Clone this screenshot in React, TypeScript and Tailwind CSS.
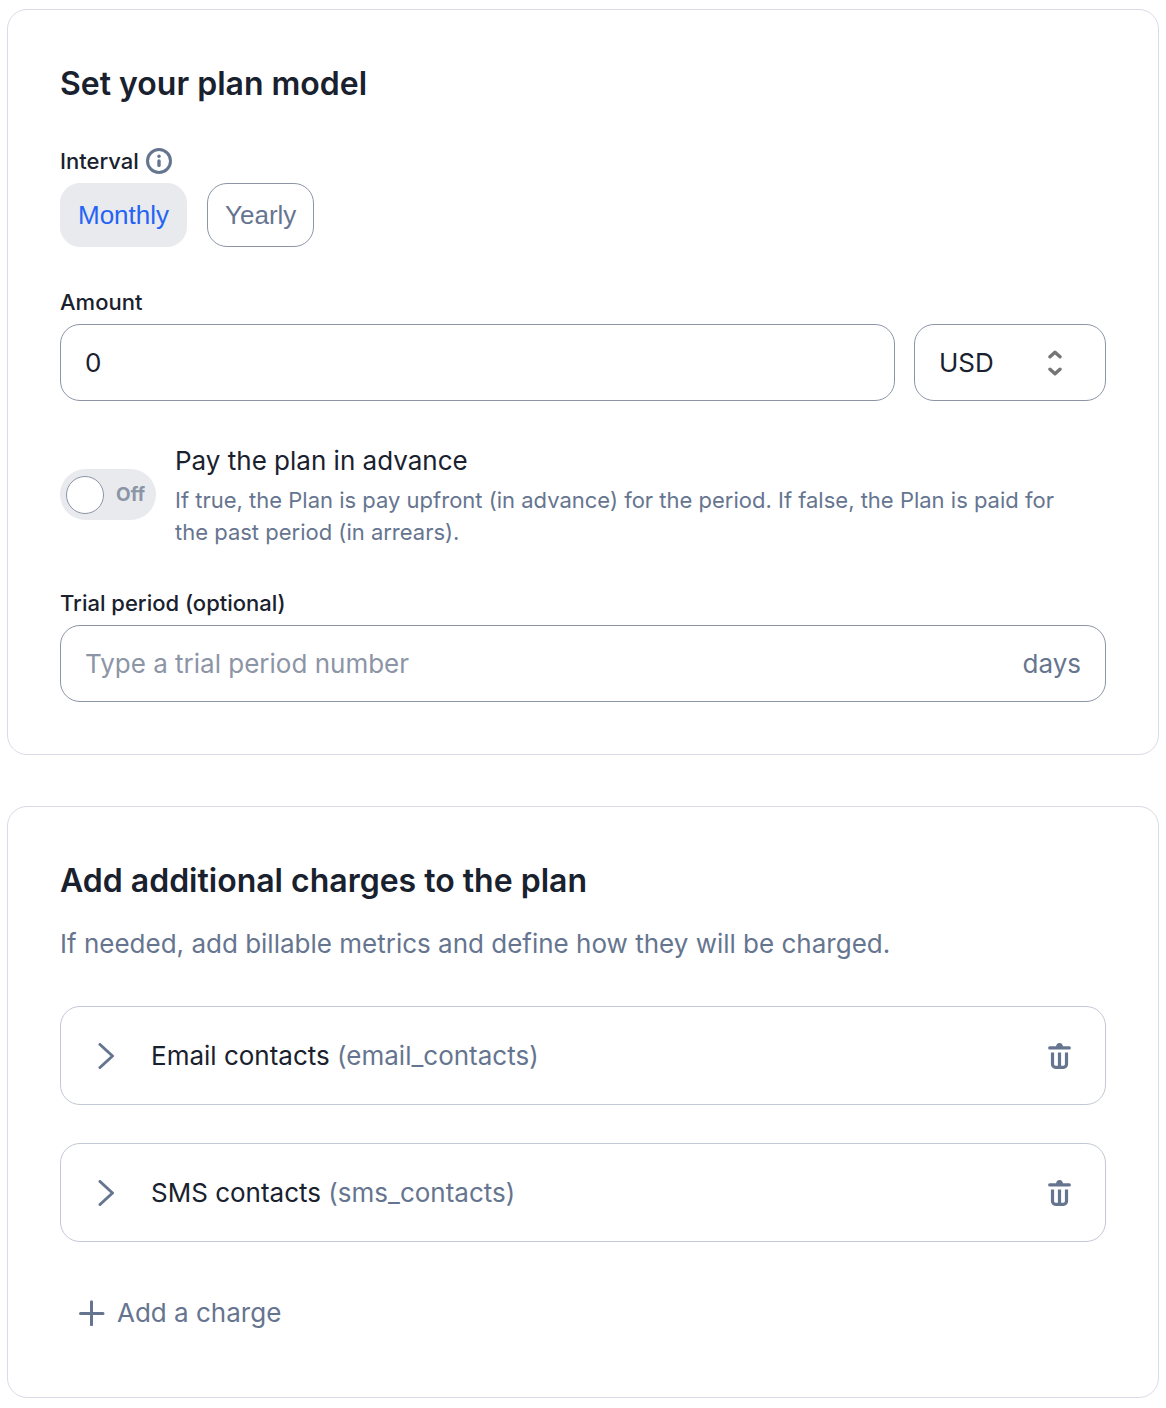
import { useState } from "react";
import type { ReactNode } from "react";

type Interval = "monthly" | "yearly";

interface Charge {
  name: string;
  code: string;
}

const intervals: { value: Interval; label: string }[] = [
  { value: "monthly", label: "Monthly" },
  { value: "yearly", label: "Yearly" },
];

const initialCharges: Charge[] = [
  { name: "Email contacts", code: "email_contacts" },
  { name: "SMS contacts", code: "sms_contacts" },
];

function InfoIcon() {
  return (
    <svg className="w-[26px] h-[26px]" fill="none" viewBox="0 0 26 26" aria-hidden="true">
      <circle cx="13" cy="13" r="11.5" stroke="currentColor" strokeWidth="3" />
      <circle cx="13" cy="8.3" r="1.7" fill="currentColor" />
      <path d="M13 13v4.4" stroke="currentColor" strokeWidth="3.4" strokeLinecap="round" />
    </svg>
  );
}

function UpDownIcon() {
  return (
    <svg className="w-4 h-[26px]" fill="none" stroke="currentColor" strokeWidth="3.4" strokeLinecap="round" strokeLinejoin="round" viewBox="0 0 16 26" aria-hidden="true">
      <path d="M3 6.800L8 2.200l5 4.600" />
      <path d="M3 19.200L8 23.800l5-4.600" />
    </svg>
  );
}

function ChevronIcon() {
  return (
    <svg className="w-[26px] h-[26px]" fill="none" stroke="currentColor" strokeWidth="3" strokeLinecap="round" strokeLinejoin="round" viewBox="0 0 26 26" aria-hidden="true">
      <path d="M7 1.500L19.500 13L7 24.500" />
    </svg>
  );
}

function TrashIcon() {
  return (
    <svg className="w-[26px] h-[26px]" fill="none" stroke="currentColor" viewBox="0 0 26 26" aria-hidden="true">
      <path d="M9 4.500a3.500 4.500 0 0 1 7 0z" fill="currentColor" stroke="none" />
      <path d="M2.700 4.900h19.600" strokeWidth="3.200" strokeLinecap="round" />
      <path d="M5.500 9.500v11.800a3 3 0 0 0 3 3h8a3 3 0 0 0 3-3V9.500M12.500 9.500v14.500" strokeWidth="3.200" />
    </svg>
  );
}

function PlusIcon() {
  return (
    <svg className="w-[26px] h-[26px]" fill="none" stroke="currentColor" strokeWidth="3" strokeLinecap="round" viewBox="0 0 26 26" aria-hidden="true">
      <path d="M12.500 1.800v23M1.500 13.500h22.500" />
    </svg>
  );
}

function Card({ children }: { children: ReactNode }) {
  return (
    <section className="flex flex-col border border-[#d9dbe6] rounded-[20px] px-[52px] pt-[51px] pb-[52px]">
      {children}
    </section>
  );
}

export default function App() {
  const [interval, setInterval] = useState<Interval>("monthly");
  const [amount, setAmount] = useState("0");
  const [currency, setCurrency] = useState("USD");
  const [payInAdvance, setPayInAdvance] = useState(false);
  const [trialPeriod, setTrialPeriod] = useState("");
  const [charges, setCharges] = useState(initialCharges);

  const removeCharge = (code: string) => {
    setCharges(charges.filter(charge => charge.code !== code));
  };

  const addCharge = () => {
    const index = charges.length + 1;
    setCharges([...charges, { name: `Charge ${index}`, code: `charge_${index}` }]);
  };

  return (
    <main className="flex flex-col gap-[51px] px-[7px] pt-[9px] pb-[10px] bg-white text-[#19212e] text-[26px] leading-10 font-['Inter',sans-serif]">
      <Card>
        <h2 className="text-[32px] leading-[45px] font-semibold mb-[39px]">Set your plan model</h2>

        {/* Interval */}
        <div className="mb-[39px]">
          <div className="flex items-center gap-[7px] mb-[6px] text-[22px] leading-8 font-medium">
            <span id="interval-label">Interval</span>
            <button type="button" aria-label="About the interval" className="text-[#66758f]">
              <InfoIcon />
            </button>
          </div>
          <div role="group" aria-labelledby="interval-label" className="flex gap-5 font-['Liberation_Sans',sans-serif]">
            {intervals.map(({ value, label }) => (
              <button
                key={value}
                type="button"
                aria-pressed={interval === value}
                onClick={() => setInterval(value)}
                className={`h-16 px-[17px] rounded-[20px] border ${
                  interval === value
                    ? "bg-[#e8eaee] border-[#e8eaee] text-[#2563f5]"
                    : "bg-white border-[#8c95a6] text-[#66758f]"
                }`}
              >
                {label}
              </button>
            ))}
          </div>
        </div>

        {/* Amount */}
        <div className="mb-10">
          <label htmlFor="amount" className="block mb-[6px] text-[22px] leading-8 font-medium">Amount</label>
          <div className="flex gap-[19px]">
            <input
              id="amount"
              type="text"
              inputMode="decimal"
              value={amount}
              onChange={(e) => setAmount(e.target.value)}
              className="flex-1 min-w-0 h-[77px] px-6 border border-[#8c95a6] rounded-[20px] focus:outline-none focus:border-[#2563f5]"
            />
            <div className="relative w-48">
              <select
                aria-label="Currency"
                value={currency}
                onChange={(e) => setCurrency(e.target.value)}
                className="w-full h-[77px] px-6 appearance-none bg-white border border-[#8c95a6] rounded-[20px] focus:outline-none focus:border-[#2563f5]"
              >
                <option>USD</option>
                <option>EUR</option>
                <option>GBP</option>
              </select>
              <span className="absolute inset-y-0 right-[43px] flex items-center text-[#757575] pointer-events-none">
                <UpDownIcon />
              </span>
            </div>
          </div>
        </div>

        {/* Pay in advance */}
        <div className="flex items-center gap-[19px] mb-[39px]">
          <button
            type="button"
            role="switch"
            aria-checked={payInAdvance}
            aria-labelledby="advance-label"
            onClick={() => setPayInAdvance(!payInAdvance)}
            className={`flex items-center justify-between shrink-0 w-24 h-[51px] pl-[6px] pr-[11px] rounded-full text-[19px] font-bold ${
              payInAdvance ? "flex-row-reverse bg-[#2563f5] text-white" : "bg-[#e8eaee] text-[#8c95a6]"
            }`}
          >
            <span className="w-[38px] h-[38px] rounded-full bg-white border border-[#8c95a6]" />
            <span>{payInAdvance ? "On" : "Off"}</span>
          </button>
          <div className="pr-8">
            <p id="advance-label" className="mb-[3px]">Pay the plan in advance</p>
            <p className="text-[22px] leading-8 text-[#66758f]">
              If true, the Plan is pay upfront (in advance) for the period. If false, the Plan is paid for the past period (in arrears).
            </p>
          </div>
        </div>

        {/* Trial period */}
        <div>
          <label htmlFor="trial" className="block mb-[6px] text-[22px] leading-8 font-medium">Trial period (optional)</label>
          <div className="flex items-center h-[77px] px-6 border border-[#8c95a6] rounded-[20px] focus-within:border-[#2563f5]">
            <input
              id="trial"
              type="text"
              placeholder="Type a trial period number"
              value={trialPeriod}
              onChange={(e) => setTrialPeriod(e.target.value)}
              className="flex-1 min-w-0 placeholder:text-[#8c95a6] focus:outline-none"
            />
            <span className="text-[#66758f]">days</span>
          </div>
        </div>
      </Card>

      <Card>
        <h2 className="text-[32px] leading-[45px] font-semibold mb-[21px]">Add additional charges to the plan</h2>
        <p className="text-[#66758f] mb-[42px]">
          If needed, add billable metrics and define how they will be charged.
        </p>

        <ul className="flex flex-col gap-[38px] mb-[39px]">
          {charges.map(charge => (
            <li key={charge.code} className="flex items-center h-[99px] px-8 border border-[#c3c8d6] rounded-[20px]">
              <button type="button" className="flex flex-1 items-center gap-8">
                <span className="text-[#66758f]">
                  <ChevronIcon />
                </span>
                <span>
                  {charge.name} <span className="text-[#66758f]">({charge.code})</span>
                </span>
              </button>
              <button
                type="button"
                aria-label={`Delete ${charge.name}`}
                onClick={() => removeCharge(charge.code)}
                className="text-[#66758f]"
              >
                <TrashIcon />
              </button>
            </li>
          ))}
        </ul>

        <button type="button" onClick={addCharge} className="flex items-center self-start gap-3 h-16 px-[19px] text-[#66758f]">
          <PlusIcon />
          Add a charge
        </button>
      </Card>
    </main>
  );
}
